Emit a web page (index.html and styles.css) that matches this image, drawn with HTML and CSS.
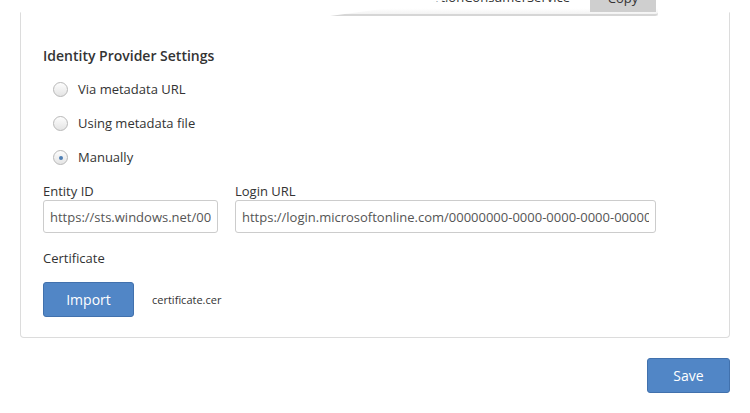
FILE: index.html
```html
<!DOCTYPE html>
<html>
<head>
<meta charset="utf-8">
<link rel="stylesheet" href="styles.css">
</head>
<body>
<div class="page">
  <div class="popover">
    <div class="pop-text">https://sp.example.com/AssertionConsumerService</div>
    <div class="pop-copy">Copy</div>
  </div>
  <section class="panel">
    <h2 class="title">Identity Provider Settings</h2>
    <div class="radios">
      <label class="radio"><span class="dot"></span>Via metadata URL</label>
      <label class="radio"><span class="dot"></span>Using metadata file</label>
      <label class="radio"><span class="dot checked"></span>Manually</label>
    </div>
    <div class="fields">
      <div class="field entity">
        <div class="label">Entity ID</div>
        <div class="input"><span class="value">https://sts.windows.net/00000000-0000-0000-0000-000000000000/</span></div>
      </div>
      <div class="field login">
        <div class="label">Login URL</div>
        <div class="input"><span class="value">https://login.microsoftonline.com/00000000-0000-0000-0000-000000000000/saml2</span></div>
      </div>
    </div>
    <div class="label cert-label">Certificate</div>
    <div class="cert-row">
      <button class="btn">Import</button>
      <span class="filename">certificate.cer</span>
    </div>
  </section>
  <div class="actions">
    <button class="btn save">Save</button>
  </div>
</div>
</body>
</html>
```

FILE: styles.css
```css
* { box-sizing: border-box; }
html, body { margin: 0; padding: 0; background: #fff; }
body {
  font-family: "Open Sans", "Noto Sans", "Liberation Sans", sans-serif;
  color: #333;
  width: 750px;
  height: 413px;
  overflow: hidden;
}
.page {
  position: relative;
  padding: 12px 20px 0 20px;
}
.popover {
  position: absolute;
  left: 330px;
  top: 0;
  width: 328px;
  height: 16px;
  overflow: hidden;
  background: linear-gradient(to bottom, #fff 0%, #fff 60%, #f3f3f3 100%);
  border-bottom: 2px solid #d6d6d6;
  border-bottom-right-radius: 3px;
  box-shadow: 0 2px 2px rgba(0,0,0,0.06);
  clip-path: polygon(0 100%, 36% 0, 100% 0, 100% 100%);
  z-index: 2;
}
.pop-text {
  position: absolute;
  right: 88px;
  top: -12px;
  font-size: 13px;
  line-height: 18px;
  color: #333;
  white-space: nowrap;
}
.pop-copy {
  position: absolute;
  right: 2px;
  top: -9px;
  width: 66px;
  height: 21px;
  padding-top: 0;
  background: #cfcfcf;
  font-size: 13px;
  line-height: 14px;
  text-align: center;
  color: #333;
}
.panel {
  border: 1px solid #dcdcdc;
  border-top-color: transparent;
  border-radius: 0 0 4px 4px;
  padding: 33px 22px 20px 22px;
}
.title {
  margin: 0;
  font-size: 14px;
  font-weight: 600;
  line-height: 20px;
  color: #333;
}
.radios {
  display: flex;
  flex-direction: column;
  margin-top: 6px;
  padding-left: 10px;
}
.radio {
  display: flex;
  align-items: center;
  height: 34px;
  font-size: 13px;
  color: #333;
}
.dot {
  width: 15px;
  height: 15px;
  border-radius: 50%;
  border: 1px solid #b8b8b8;
  background: linear-gradient(to bottom, #fdfdfd, #e4e4e4);
  margin-right: 10px;
  position: relative;
  flex: none;
}
.dot.checked::after {
  content: "";
  position: absolute;
  left: 5px;
  top: 5px;
  width: 4px;
  height: 4px;
  border-radius: 50%;
  background: #4f7fb4;
}
.fields {
  display: flex;
  gap: 17px;
  margin-top: 8px;
}
.label {
  font-size: 13px;
  line-height: 18px;
  color: #333;
}
.entity { width: 175px; }
.login { width: 421px; }
.input {
  height: 33px;
  border: 1px solid #cccccc;
  border-radius: 3px;
  padding: 0 6px;
  display: flex;
  align-items: center;
}
.value {
  display: block;
  width: 100%;
  overflow: hidden;
  white-space: nowrap;
  font-size: 13px;
  line-height: 18px;
  color: #555;
}
.cert-label { margin-top: 16px; }
.cert-row {
  display: flex;
  align-items: center;
  gap: 18px;
  margin-top: 15px;
}
.btn {
  font-family: "Open Sans", "Noto Sans", "Liberation Sans", sans-serif;
  font-size: 14px;
  color: #fff;
  background: #5186c6;
  border: 1px solid #4171ad;
  border-radius: 3px;
  height: 35px;
  width: 91px;
  padding: 0;
}
.filename {
  font-size: 11px;
  color: #333;
}
.actions {
  display: flex;
  justify-content: flex-end;
  margin-top: 20px;
}
.save { width: 83px; }
```
